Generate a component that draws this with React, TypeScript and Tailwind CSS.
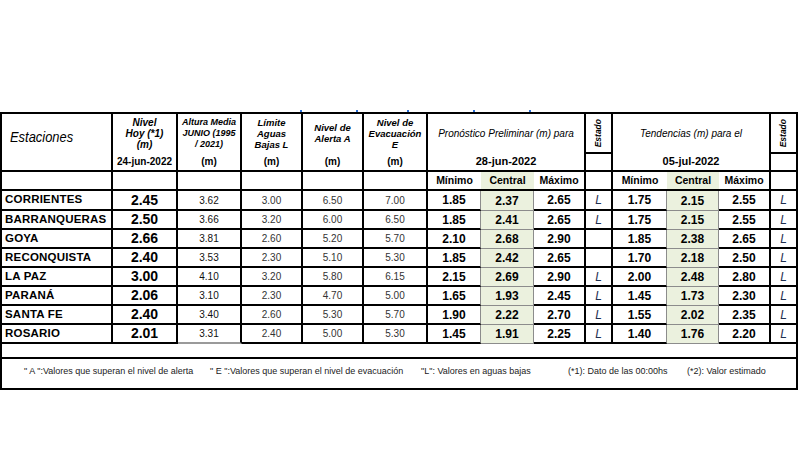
import React from "react"

const B = "border-r-2 border-b-2 border-black"

const rows = [
  ["CORRIENTES", "2.45", "3.62", "3.00", "6.50", "7.00", "1.85", "2.37", "2.65", "L", "1.75", "2.15", "2.55", "L"],
  ["BARRANQUERAS", "2.50", "3.66", "3.20", "6.00", "6.50", "1.85", "2.41", "2.65", "L", "1.75", "2.15", "2.55", "L"],
  ["GOYA", "2.66", "3.81", "2.60", "5.20", "5.70", "2.10", "2.68", "2.90", "", "1.85", "2.38", "2.65", "L"],
  ["RECONQUISTA", "2.40", "3.53", "2.30", "5.10", "5.30", "1.85", "2.42", "2.65", "", "1.70", "2.18", "2.50", "L"],
  ["LA PAZ", "3.00", "4.10", "3.20", "5.80", "6.15", "2.15", "2.69", "2.90", "L", "2.00", "2.48", "2.80", "L"],
  ["PARANÁ", "2.06", "3.10", "2.30", "4.70", "5.00", "1.65", "1.93", "2.45", "L", "1.45", "1.73", "2.30", "L"],
  ["SANTA FE", "2.40", "3.40", "2.60", "5.30", "5.70", "1.90", "2.22", "2.70", "L", "1.55", "2.02", "2.35", "L"],
  ["ROSARIO", "2.01", "3.31", "2.40", "5.00", "5.30", "1.45", "1.91", "2.25", "L", "1.40", "1.76", "2.20", "L"],
]

function HeadCol({ lines, bottom, size = "text-[9.5px]" }: { lines: string[]; bottom: string; size?: string }) {
  return (
    <div className={`${B} row-span-2 flex flex-col`}>
      <div className={`flex h-[38px] flex-col items-center justify-center text-center font-bold italic leading-[11px] ${size}`}>
        {lines.map((l) => (
          <div key={l}>{l}</div>
        ))}
      </div>
      <div className="flex flex-1 items-center justify-center text-[10px] font-bold">{bottom}</div>
    </div>
  )
}

function GroupHead({ title, date }: { title: string; date: string }) {
  return (
    <div className={`${B} col-span-3 row-span-2 flex flex-col`}>
      <div className="flex h-[38px] items-center justify-center text-[10px] italic">{title}</div>
      <div className="flex flex-1 items-center justify-center text-[11px] font-bold">{date}</div>
    </div>
  )
}

function EstadoHead() {
  return (
    <div className={`${B} flex items-center justify-center`}>
      <span className="rotate-180 text-[8.5px] font-bold italic leading-none [writing-mode:vertical-rl]">Estado</span>
    </div>
  )
}

function SubHead() {
  return (
    <>
      <div className="flex items-center justify-center border-b-2 border-black text-[10.5px] font-bold">Mínimo</div>
      <div className="flex items-center justify-center border-b-2 border-black bg-[#ebf1de] text-[10.5px] font-bold">Central</div>
      <div className={`${B} flex items-center justify-center text-[10.5px] font-bold`}>Máximo</div>
      <div className={B}></div>
    </>
  )
}

function ForecastCells({ vals, estado }: { vals: string[]; estado: string }) {
  return (
    <>
      <div className="flex items-center justify-center border-r border-b-2 border-r-[#8c8c8c] border-b-black text-[12px] font-bold">{vals[0]}</div>
      <div className="flex items-center justify-center border-r border-b border-[#8c8c8c] bg-[#ebf1de] text-[12px] font-bold">{vals[1]}</div>
      <div className={`${B} flex items-center justify-center text-[12px] font-bold`}>{vals[2]}</div>
      <div className={`${B} flex items-center justify-center text-[12px] italic text-[#1f3050]`}>{estado}</div>
    </>
  )
}

export default function App() {
  return (
    <div className="h-[450px] w-[800px] overflow-hidden bg-white font-['Liberation_Sans',Arial,sans-serif] text-black">
      <div className="h-[110px]"></div>
      <div className="flex h-[2px]">
        <span className="ml-[300px] h-[2px] w-[2px] bg-[#2a6fd6]"></span>
        <span className="ml-[54px] h-[2px] w-[2px] bg-[#2a6fd6]"></span>
        <span className="ml-[49px] h-[2px] w-[2px] bg-[#2a6fd6]"></span>
        <span className="ml-[64px] h-[2px] w-[2px] bg-[#2a6fd6]"></span>
        <span className="ml-[54px] h-[2px] w-[2px] bg-[#2a6fd6]"></span>
      </div>
      <div className="grid w-[798px] grid-cols-[111px_65px_64px_61px_61px_64px_53px_53px_52px_27px_54px_52px_52px_27px] grid-rows-[40px_18px_19px_20px_19px_19px_19px_19px_19px_19px_19px_15px_31px] border-t-2 border-l-2 border-black">
        {/* header */}
        <div className={`${B} row-span-2 pt-[11px] pl-[8px]`}>
          <span className="inline-block origin-left scale-x-[0.86] text-[15px] italic leading-none">Estaciones</span>
        </div>
        <HeadCol lines={["Nivel", "Hoy (*1)", "(m)"]} bottom="24-jun-2022" size="text-[10px]" />
        <HeadCol lines={["Altura Media", "JUNIO  (1995", "/ 2021)"]} bottom="(m)" size="text-[9px]" />
        <HeadCol lines={["Límite", "Aguas", "Bajas L"]} bottom="(m)" />
        <HeadCol lines={["Nivel de", "Alerta A"]} bottom="(m)" />
        <HeadCol lines={["Nivel de", "Evacuación", "E"]} bottom="(m)" />
        <GroupHead title="Pronóstico Preliminar (m) para" date="28-jun-2022" />
        <EstadoHead />
        <GroupHead title="Tendencias (m) para el" date="05-jul-2022" />
        <EstadoHead />
        <div className={B}></div>
        <div className={B}></div>

        {/* sub header */}
        <div className={B}></div>
        <div className={B}></div>
        <div className={B}></div>
        <div className={B}></div>
        <div className={B}></div>
        <div className={B}></div>
        <SubHead />
        <SubHead />

        {/* data */}
        {rows.map((r, i) => (
          <React.Fragment key={r[0]}>
            <div className={`${B} flex items-center pl-[3px] text-[11.5px] font-bold tracking-[0.2px]`}>{r[0]}</div>
            <div className={`${B} flex items-center justify-center text-[14px] font-bold`}>{r[1]}</div>
            <div className={`border-r-2 border-b-2 border-r-black flex items-center justify-center text-[10px] text-[#111] ${i === rows.length - 1 ? "border-b-[#9a9a9a]" : "border-b-black"}`}>{r[2]}</div>
            <div className={`${B} flex items-center justify-center text-[10px] text-[#333]`}>{r[3]}</div>
            <div className={`${B} flex items-center justify-center text-[10px] text-[#333]`}>{r[4]}</div>
            <div className={`${B} flex items-center justify-center text-[10px] text-[#333]`}>{r[5]}</div>
            <ForecastCells vals={[r[6], r[7], r[8]]} estado={r[9]} />
            <ForecastCells vals={[r[10], r[11], r[12]]} estado={r[13]} />
          </React.Fragment>
        ))}

        <div className={`${B} col-span-14`}></div>
        <div className={`${B} col-span-14 flex items-start pt-[6px] pl-[22px] text-[9px] text-[#222]`}>
          <span className="w-[186px] shrink-0">" A ":Valores que superan el nivel de alerta</span>
          <span className="w-[211px] shrink-0">" E ":Valores que superan el nivel de evacuación</span>
          <span className="w-[147px] shrink-0">"L": Valores en aguas bajas</span>
          <span className="w-[119px] shrink-0">(*1): Dato de las 00:00hs</span>
          <span>(*2): Valor estimado</span>
        </div>
      </div>
    </div>
  )
}
